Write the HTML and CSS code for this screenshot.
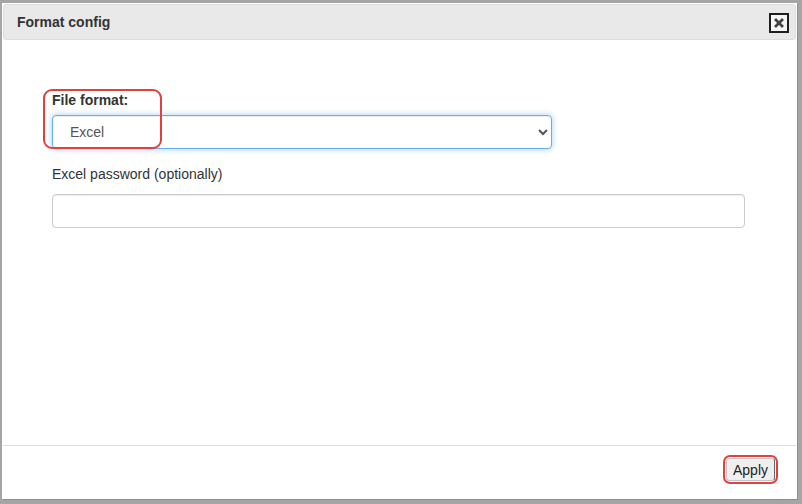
FILE: index.html
```html
<!DOCTYPE html>
<html lang="en">
<head>
  <meta charset="UTF-8">
  <title>Format config</title>
  <link rel="stylesheet" href="styles.css">
</head>
<body>

  <div class="dialog">
    <div class="titlebar">
      <span class="title">Format config</span>
      <button class="close" title="Close">
        <svg width="10" height="10" viewBox="0 0 10 10">
          <path d="M2 2 L8 8 M8 2 L2 8" stroke="#444" stroke-width="2.8" stroke-linecap="square"/>
        </svg>
      </button>
    </div>

    <div class="content">
      <div class="form-group">
        <div class="mark mark-format"></div>
        <label for="fileFormat" class="bold">File format:</label>
        <select id="fileFormat" class="form-control focused">
          <option value="excel">Excel</option>
          <option value="csv">CSV</option>
          <option value="pdf">PDF</option>
        </select>
      </div>

      <div class="form-group">
        <label for="excelPassword" class="pw-label">Excel password (optionally)</label>
        <input type="password" id="excelPassword" class="form-control wide">
      </div>
    </div>

    <div class="footer">
      <span class="mark-btn"><button class="apply">Apply</button></span>
    </div>
  </div>

</body>
</html>
```

FILE: styles.css
```css
* {
  box-sizing: border-box;
}

html, body {
  height: 100%;
}

body {
  margin: 0;
  padding: 3px 5px 5px 2px;
  background: #a5a5a5;
  font-family: "Liberation Sans", Arial, sans-serif;
  font-size: 14px;
  color: #333;
}

.dialog {
  height: 496px;
  background: #fff;
  padding: 1px;
  display: flex;
  flex-direction: column;
  box-shadow: 1px 1px 0 #8d8d8d;
}

.titlebar {
  height: 36px;
  display: flex;
  align-items: center;
  justify-content: space-between;
  padding: 0 6px 0 13px;
  background: #e9e9e9;
  border: 1px solid #dddddd;
  border-radius: 3px;
}

.title {
  font-weight: bold;
  color: #333;
}

.close {
  width: 20px;
  height: 20px;
  padding: 0;
  margin-top: 1px;
  display: flex;
  align-items: center;
  justify-content: center;
  background: #f6f6f6;
  border: 2px solid #1f1f1f;
  border-radius: 0;
  cursor: pointer;
}

.content {
  flex: 1;
  padding: 50px 50px 0 49px;
}

.form-group {
  position: relative;
  margin-bottom: 15px;
}

label {
  display: block;
  line-height: 20px;
  margin-bottom: 5px;
}

.bold {
  font-weight: bold;
}

.pw-label {
  margin-bottom: 10px;
}

.form-control {
  display: block;
  height: 34px;
  font-family: inherit;
  font-size: 14px;
  color: #555;
  background: #fff;
  border: 1px solid #ccc;
  border-radius: 4px;
  box-shadow: inset 0 1px 1px rgba(0, 0, 0, .075);
}

select.form-control {
  width: 500px;
  padding: 6px 8px 6px 13px;
}

.focused {
  border-color: #66afe9;
  outline: 0;
  box-shadow: inset 0 1px 1px rgba(0, 0, 0, .075), 0 0 6px rgba(102, 175, 233, .6);
}

.wide {
  width: 693px;
  padding: 6px 12px;
}

.mark {
  position: absolute;
  border: 2px solid #e0403f;
  border-radius: 9px;
  pointer-events: none;
}

.mark-format {
  left: -9px;
  top: -1px;
  width: 119px;
  height: 60px;
  z-index: 2;
}

.footer {
  height: 53px;
  border-top: 1px solid #dddddd;
  display: flex;
  align-items: center;
  justify-content: flex-end;
  padding-right: 18px;
  padding-bottom: 5px;
}

.mark-btn {
  display: inline-flex;
  padding: 1px;
  border: 2px solid #e0403f;
  border-radius: 7px;
}

.apply {
  width: 49px;
  height: 23px;
  padding: 0;
  font-family: inherit;
  font-size: 14px;
  color: #222;
  background: #efefef;
  border: 1px solid #c4c4c4;
  border-right-color: #666;
  border-radius: 3px;
}
```
